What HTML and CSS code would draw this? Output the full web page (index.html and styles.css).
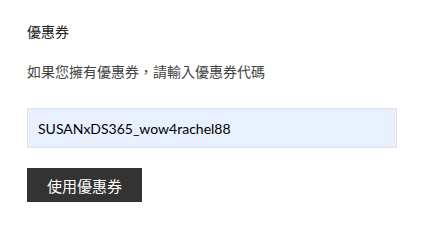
FILE: index.html
```html
<!DOCTYPE html>
<html lang="zh-Hant">
<head>
<meta charset="utf-8">
<link rel="stylesheet" href="styles.css">
</head>
<body>
<section class="coupon">
  <h3 class="coupon-title">優惠券</h3>
  <p class="coupon-hint">如果您擁有優惠券，請輸入優惠券代碼</p>
  <input class="coupon-input" type="text" value="SUSANxDS365_wow4rachel88">
  <button class="coupon-btn" type="button">使用優惠券</button>
</section>
</body>
</html>
```
FILE: styles.css
```css
html, body {
  margin: 0;
  padding: 0;
  background: #fff;
}
body {
  font-family: Lato, "Noto Sans CJK TC", sans-serif;
  color: #333;
}
.coupon {
  display: flex;
  flex-direction: column;
  align-items: flex-start;
  padding: 22px 24px 0 27px;
}
.coupon-title {
  margin: 0;
  font-size: 14px;
  font-weight: normal;
  line-height: 20px;
  color: #222;
}
.coupon-hint {
  margin: 20px 0 0;
  font-size: 14px;
  line-height: 20px;
  color: #444;
}
.coupon-input {
  box-sizing: border-box;
  width: 370px;
  height: 40px;
  margin: 26px 0 0;
  padding: 0 10px;
  border: 1px solid #e2e2e2;
  background: #e8f0fe;
  font-family: Lato, "Noto Sans CJK TC", sans-serif;
  font-size: 14px;
  color: #000;
  outline: none;
}
.coupon-btn {
  box-sizing: border-box;
  height: 34px;
  margin: 20px 0 0;
  padding: 0 20px;
  border: none;
  background: #333;
  color: #fff;
  font-family: Lato, "Noto Sans CJK TC", sans-serif;
  font-size: 15px;
  cursor: pointer;
}
```
